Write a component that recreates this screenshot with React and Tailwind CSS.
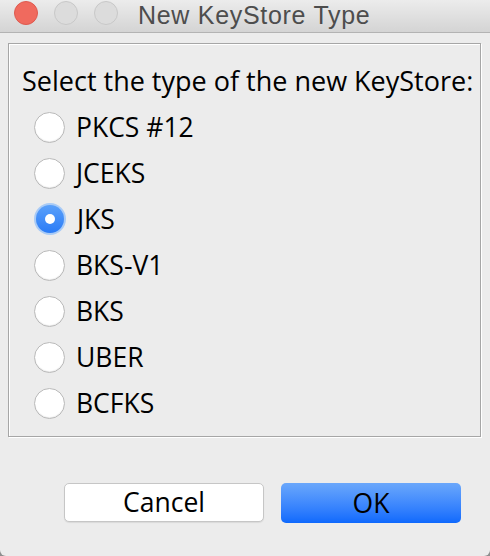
import React, { useState } from "react";

const TYPES = ["PKCS #12", "JCEKS", "JKS", "BKS-V1", "BKS", "UBER", "BCFKS"];

const Radio = ({ checked }) =>
  checked ? (
    <span className="flex h-[32px] w-[32px] shrink-0 items-center justify-center rounded-full bg-[#a9cbf6]">
      <span className="flex h-[28px] w-[28px] items-center justify-center rounded-full bg-gradient-to-b from-[#5aa0fa] to-[#2a7bf6]">
        <span className="h-[10px] w-[10px] rounded-full bg-white" />
      </span>
    </span>
  ) : (
    <span className="h-[31px] w-[31px] shrink-0 rounded-full border border-[#b9b9b9] bg-white shadow-[inset_0_-1px_1px_rgba(0,0,0,0.08)]" />
  );

const App = () => {
  const [selected, setSelected] = useState("JKS");

  return (
    <div className="h-[556px] w-[490px] bg-[#8e8e8e]">
      <div
        className="flex h-full flex-col rounded-b-[6px] bg-[#ececec]"
        style={{ fontFamily: '"Open Sans", "Noto Sans", sans-serif' }}
      >
        {/* Title bar */}
        <div className="flex h-[33px] items-start border-b border-[#b3b3b3] bg-gradient-to-b from-[#ececec] to-[#d4d4d4] pl-[14px] pt-[1px]">
          <span className="h-[24px] w-[24px] rounded-full border border-[#de5a4f] bg-[#f06a5e]" />
          <span className="ml-[16px] h-[24px] w-[24px] rounded-full border border-[#c8c8c8] bg-[#dcdcdc]" />
          <span className="ml-[16px] h-[24px] w-[24px] rounded-full border border-[#c8c8c8] bg-[#dcdcdc]" />
          <span
            className="ml-[20px] text-[25px] leading-[28px] tracking-[0.7px] text-[#4d4d4d]"
            style={{ fontFamily: '"Liberation Sans", Arial, sans-serif' }}
          >
            New KeyStore Type
          </span>
        </div>

        {/* Etched panel */}
        <div className="ml-[8px] mr-[9px] mt-[10px] flex h-[394px] flex-col border border-[#a6a6a6] shadow-[inset_1px_1px_0_#ffffff,1px_1px_0_#ffffff]">
          <div className="pl-[13px] pt-[20px] text-[27px] leading-[34px] text-black">
            Select the type of the new KeyStore:
          </div>
          <div className="mt-[6px] flex flex-col">
            {TYPES.map((t) => (
              <label
                key={t}
                onClick={() => setSelected(t)}
                className="flex h-[46px] cursor-default items-center gap-[11px] pl-[25px] text-[26.5px] text-black"
              >
                <Radio checked={selected === t} />
                <span className="leading-[32px]">{t}</span>
              </label>
            ))}
          </div>
        </div>

        {/* Buttons */}
        <div className="mt-[46px] flex justify-end gap-[17px] pr-[29px]">
          <button className="h-[39px] w-[200px] rounded-[5px] border border-[#c6c6c6] bg-white text-[26.5px] leading-none text-black shadow-[0_1px_1px_rgba(0,0,0,0.08)]">
            Cancel
          </button>
          <button className="h-[40px] w-[180px] rounded-[5px] bg-gradient-to-b from-[#6aa7fb] to-[#0d69fd] text-[26.5px] leading-none text-black">
            OK
          </button>
        </div>
      </div>
    </div>
  );
};

export default App;
